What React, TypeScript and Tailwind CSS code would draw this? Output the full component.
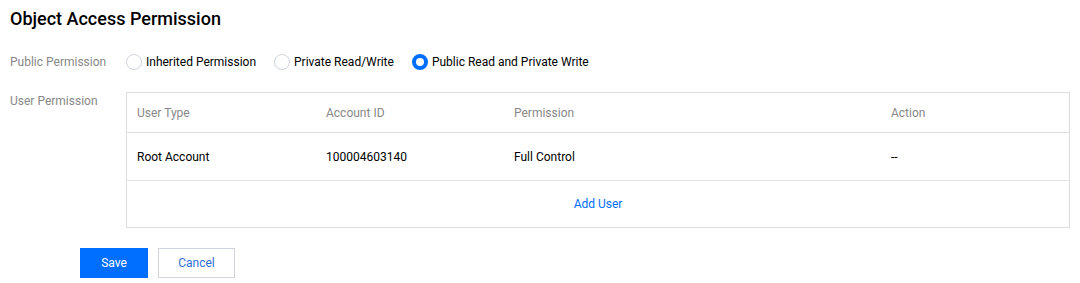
import React from "react";

function Radio({ checked, label }: { checked?: boolean; label: string }) {
  return (
    <label className="flex items-center mr-[18px]">
      {checked ? (
        <span className="w-4 h-4 rounded-full border-[4px] border-[#006eff] bg-white box-border" />
      ) : (
        <span className="w-4 h-4 rounded-full border border-[#cfd5de] bg-white box-border" />
      )}
      <span className="ml-[4px] text-[12px] text-[#000000]">{label}</span>
    </label>
  );
}

export default function App() {
  return (
    <div
      className="w-[1080px] h-[283px] bg-white text-[12px] overflow-hidden"
      style={{ fontFamily: "Roboto, 'Liberation Sans', sans-serif" }}
    >
      <div className="pl-[10px] pt-[6px]">
        <h2 className="text-[18px] leading-[26px] font-medium text-[#000000]">Object Access Permission</h2>

        <div className="flex items-center mt-[22px] h-[16px]">
          <div className="w-[116px] text-[#888888]">Public Permission</div>
          <Radio label="Inherited Permission" />
          <Radio label="Private Read/Write" />
          <Radio checked label="Public Read and Private Write" />
        </div>

        <div className="flex mt-[22px]">
          <div className="w-[116px] text-[#888888] leading-[18px]">User Permission</div>
          <div className="w-[944px] border border-[#dddddd] box-border">
            <div className="grid grid-cols-[189px_188px_377px_1fr] h-[40px] items-center border-b border-[#dddddd] text-[#888888]">
              <div className="pl-[10px]">User Type</div>
              <div className="pl-[10px]">Account ID</div>
              <div className="pl-[10px]">Permission</div>
              <div className="pl-[10px]">Action</div>
            </div>
            <div className="grid grid-cols-[189px_188px_377px_1fr] h-[48px] items-center border-b border-[#e5e5e5] text-[#000000]">
              <div className="pl-[10px]">Root Account</div>
              <div className="pl-[10px]">100004603140</div>
              <div className="pl-[10px]">Full Control</div>
              <div className="pl-[10px]">--</div>
            </div>
            <div className="h-[46px] flex items-center justify-center">
              <span className="text-[#006eff]">Add User</span>
            </div>
          </div>
        </div>

        <div className="flex mt-[20px] pl-[70px] gap-[10px]">
          <button className="w-[68px] h-[30px] bg-[#006eff] text-white text-[12px]">Save</button>
          <button className="w-[77px] h-[30px] border border-[#cfd5de] bg-white text-[#2d6fd6] text-[12px]">Cancel</button>
        </div>
      </div>
    </div>
  );
}
